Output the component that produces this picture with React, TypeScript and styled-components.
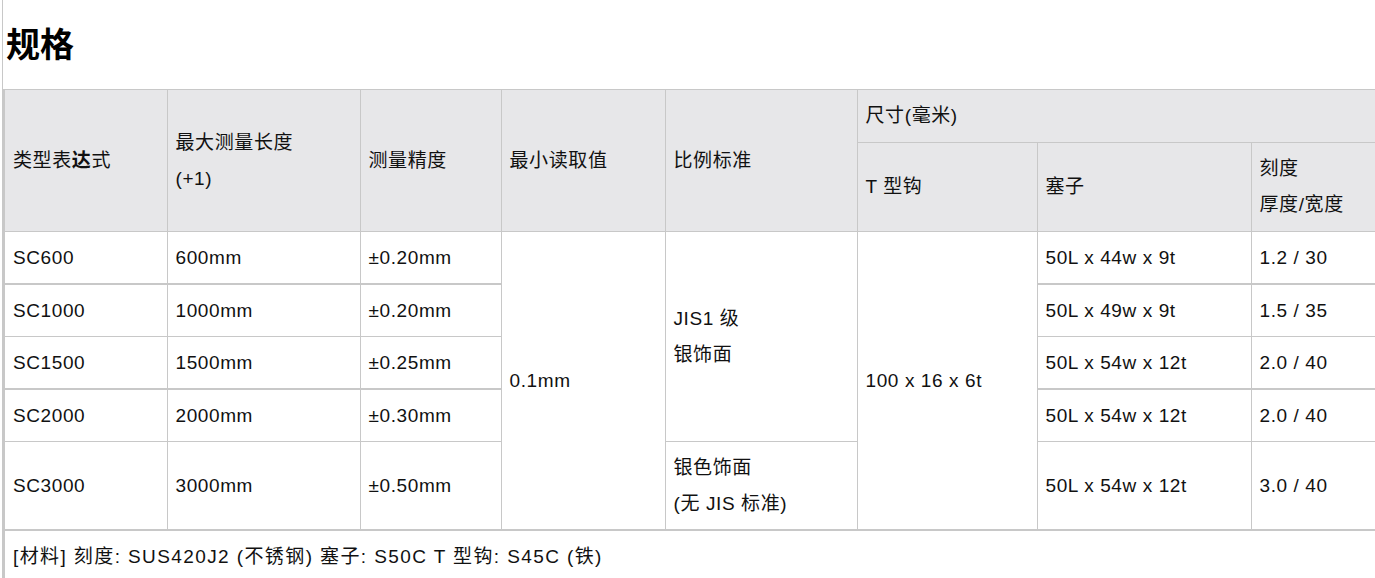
import styled, { createGlobalStyle } from "styled-components";

const GlobalStyle = createGlobalStyle`
  html, body {
    margin: 0;
    padding: 0;
    background: #fff;
    overflow: hidden;
  }
  body {
    font-family: "Liberation Sans", "Noto Sans CJK SC", sans-serif;
    color: #111;
  }
`;

const Page = styled.div`
  margin-left: 2px;
  border-left: 1px solid #c8c8c8;
  min-height: 100vh;
  padding-top: 22px;
`;

const Title = styled.h2`
  margin: 0 0 25px 3px;
  font-family: "Noto Sans CJK SC", sans-serif;
  font-size: 34px;
  line-height: 42px;
  font-weight: 700;
  color: #000;
`;

const Table = styled.table`
  width: 1400px;
  table-layout: fixed;
  border-collapse: collapse;
  border-left: 2px solid #c8c8c8;
  font-size: 19px;
  letter-spacing: 0.6px;
  line-height: 36px;
`;

const HeadCell = styled.th`
  background: #e7e7e9;
  border: 1px solid #c8c8c8;
  padding: 8px 8px;
  text-align: left;
  font-weight: 400;
  vertical-align: middle;
  color: #111;
`;

const Cell = styled.td<{ $thick?: boolean }>`
  border: 1px solid #c8c8c8;
  border-bottom-width: ${(p) => (p.$thick ? "2px" : "1px")};
  padding: 8px 8px 7px;
  vertical-align: middle;
  color: #111;
  white-space: nowrap;
`;

const Note = styled.td`
  border-top: 2px solid #c8c8c8;
  padding: 8px 8px;
  color: #111;
  letter-spacing: 1.4px;
`;

const Strong = styled.b`
  font-weight: 700;
`;

const rows = [
  { model: "SC600", len: "600mm", acc: "±0.20mm", plug: "50L x 44w x 9t", scale: "1.2 / 30" },
  { model: "SC1000", len: "1000mm", acc: "±0.20mm", plug: "50L x 49w x 9t", scale: "1.5 / 35" },
  { model: "SC1500", len: "1500mm", acc: "±0.25mm", plug: "50L x 54w x 12t", scale: "2.0 / 40" },
  { model: "SC2000", len: "2000mm", acc: "±0.30mm", plug: "50L x 54w x 12t", scale: "2.0 / 40" },
  { model: "SC3000", len: "3000mm", acc: "±0.50mm", plug: "50L x 54w x 12t", scale: "3.0 / 40" },
];

export default function App() {
  return (
    <Page>
      <GlobalStyle />
      <Title>规格</Title>
      <Table>
        <colgroup>
          <col style={{ width: 163 }} />
          <col style={{ width: 193 }} />
          <col style={{ width: 141 }} />
          <col style={{ width: 164 }} />
          <col style={{ width: 192 }} />
          <col style={{ width: 180 }} />
          <col style={{ width: 214 }} />
          <col style={{ width: 153 }} />
        </colgroup>
        <thead>
          <tr>
            <HeadCell rowSpan={2}>
              类型表<Strong>达</Strong>式
            </HeadCell>
            <HeadCell rowSpan={2}>
              最大测量长度
              <br />
              (+1)
            </HeadCell>
            <HeadCell rowSpan={2}>测量精度</HeadCell>
            <HeadCell rowSpan={2}>最小读取值</HeadCell>
            <HeadCell rowSpan={2}>比例标准</HeadCell>
            <HeadCell colSpan={3}>尺寸(毫米)</HeadCell>
          </tr>
          <tr>
            <HeadCell>T 型钩</HeadCell>
            <HeadCell>塞子</HeadCell>
            <HeadCell>
              刻度
              <br />
              厚度/宽度
            </HeadCell>
          </tr>
        </thead>
        <tbody>
          {rows.map((r, i) => {
            const thick = i === 0 || i === 2;
            return (
              <tr key={r.model}>
                <Cell $thick={thick}>{r.model}</Cell>
                <Cell $thick={thick}>{r.len}</Cell>
                <Cell $thick={thick}>{r.acc}</Cell>
                {i === 0 && <Cell rowSpan={5}>0.1mm</Cell>}
                {i === 0 && (
                  <Cell rowSpan={4}>
                    JIS1 级
                    <br />
                    银饰面
                  </Cell>
                )}
                {i === 4 && (
                  <Cell>
                    银色饰面
                    <br />
                    (无 JIS 标准)
                  </Cell>
                )}
                {i === 0 && <Cell rowSpan={5}>100 x 16 x 6t</Cell>}
                <Cell $thick={thick}>{r.plug}</Cell>
                <Cell $thick={thick}>{r.scale}</Cell>
              </tr>
            );
          })}
          <tr>
            <Note colSpan={8}>[材料] 刻度: SUS420J2 (不锈钢) 塞子: S50C T 型钩: S45C (铁)</Note>
          </tr>
        </tbody>
      </Table>
    </Page>
  );
}
